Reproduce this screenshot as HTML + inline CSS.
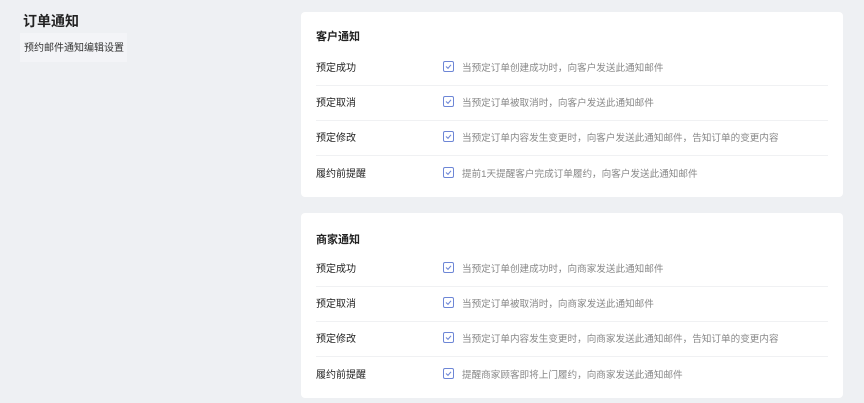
<!DOCTYPE html><html><head><meta charset="utf-8"><style>
body{margin:0;width:864px;height:403px;background:#eef0f3;font-family:"Liberation Sans","Noto Sans CJK SC",sans-serif;position:relative;overflow:hidden}
.t{position:absolute;left:23px;top:11px;font-size:14px;font-weight:bold;color:#222}
.sub{position:absolute;left:20px;top:33px;width:107px;height:29px;background:#f3f4f7;font-size:10px;color:#333;padding:6px 0 0 4px;box-sizing:border-box}
.card{position:absolute;left:301px;width:542px;height:185px;background:#fff;border-radius:4px}
.h{position:absolute;left:15px;font-size:11px;font-weight:bold;color:#222}
.row{position:absolute;left:15px;width:512px;height:35px;font-size:10px;line-height:12px}
.row.b{border-bottom:1px solid #f0f1f3}
.l{position:absolute;left:0;top:13px;color:#222}
.cb{position:absolute;left:127px;top:11px;width:9px;height:9px;border:1.3px solid #6d86d6;border-radius:2px}
.cb svg{position:absolute;left:1px;top:1px}
.d{position:absolute;left:146px;top:13px;color:#888;font-size:9.6px}
</style></head><body>
<div class="t">订单通知</div>
<div class="sub">预约邮件通知编辑设置</div>
<div class="card" style="top:12px">
<div class="h" style="top:16px">客户通知</div>
<div class="row b" style="top:38px"><span class="l">预定成功</span><span class="cb"><svg width="7" height="7" viewBox="0 0 7 7"><path d="M1 3.5L3 5.3 6 1.8" fill="none" stroke="#6d86d6" stroke-width="1.1"/></svg></span><span class="d">当预定订单创建成功时，向客户发送此通知邮件</span></div>
<div class="row b" style="top:73px"><span class="l">预定取消</span><span class="cb"><svg width="7" height="7" viewBox="0 0 7 7"><path d="M1 3.5L3 5.3 6 1.8" fill="none" stroke="#6d86d6" stroke-width="1.1"/></svg></span><span class="d">当预定订单被取消时，向客户发送此通知邮件</span></div>
<div class="row b" style="top:108px"><span class="l">预定修改</span><span class="cb"><svg width="7" height="7" viewBox="0 0 7 7"><path d="M1 3.5L3 5.3 6 1.8" fill="none" stroke="#6d86d6" stroke-width="1.1"/></svg></span><span class="d">当预定订单内容发生变更时，向客户发送此通知邮件，告知订单的变更内容</span></div>
<div class="row" style="top:144px"><span class="l">履约前提醒</span><span class="cb"><svg width="7" height="7" viewBox="0 0 7 7"><path d="M1 3.5L3 5.3 6 1.8" fill="none" stroke="#6d86d6" stroke-width="1.1"/></svg></span><span class="d">提前1天提醒客户完成订单履约，向客户发送此通知邮件</span></div>
</div>
<div class="card" style="top:213px">
<div class="h" style="top:18px">商家通知</div>
<div class="row b" style="top:38px"><span class="l">预定成功</span><span class="cb"><svg width="7" height="7" viewBox="0 0 7 7"><path d="M1 3.5L3 5.3 6 1.8" fill="none" stroke="#6d86d6" stroke-width="1.1"/></svg></span><span class="d">当预定订单创建成功时，向商家发送此通知邮件</span></div>
<div class="row b" style="top:73px"><span class="l">预定取消</span><span class="cb"><svg width="7" height="7" viewBox="0 0 7 7"><path d="M1 3.5L3 5.3 6 1.8" fill="none" stroke="#6d86d6" stroke-width="1.1"/></svg></span><span class="d">当预定订单被取消时，向商家发送此通知邮件</span></div>
<div class="row b" style="top:108px"><span class="l">预定修改</span><span class="cb"><svg width="7" height="7" viewBox="0 0 7 7"><path d="M1 3.5L3 5.3 6 1.8" fill="none" stroke="#6d86d6" stroke-width="1.1"/></svg></span><span class="d">当预定订单内容发生变更时，向商家发送此通知邮件，告知订单的变更内容</span></div>
<div class="row" style="top:144px"><span class="l">履约前提醒</span><span class="cb"><svg width="7" height="7" viewBox="0 0 7 7"><path d="M1 3.5L3 5.3 6 1.8" fill="none" stroke="#6d86d6" stroke-width="1.1"/></svg></span><span class="d">提醒商家顾客即将上门履约，向商家发送此通知邮件</span></div>
</div>
</body></html>
